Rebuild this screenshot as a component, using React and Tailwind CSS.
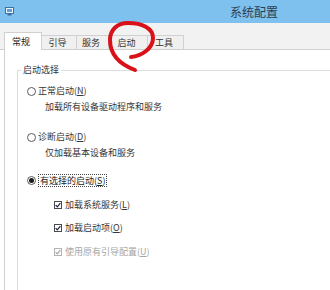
const tabs = [
  { label: '常规', w: 'w-[38px]', active: true },
  { label: '引导', w: 'w-[35px]' },
  { label: '服务', w: 'w-[32px]' },
  { label: '启动', w: 'w-[39px]' },
  { label: '工具', w: 'w-[36px]' },
];

const Radio = ({ checked }) => (
  <span className="w-[9px] h-[9px] rounded-full border border-[#5a5a5a] bg-white flex items-center justify-center shrink-0">
    {checked && <span className="w-[5px] h-[5px] rounded-full bg-[#1a1a1a]" />}
  </span>
);

const Check = ({ disabled }) => (
  <span
    className={
      disabled
        ? 'w-[8px] h-[8px] border border-[#b4b4b4] bg-white flex items-center justify-center shrink-0'
        : 'w-[8px] h-[8px] border border-[#4a4a4a] bg-white flex items-center justify-center shrink-0'
    }
  >
    <svg width="6" height="6" viewBox="0 0 6 6">
      <path
        d="M0.6 3.1 L2.3 4.8 L5.4 1.1"
        fill="none"
        stroke={disabled ? '#a8a8a8' : '#1f2f4a'}
        strokeWidth="1.3"
      />
    </svg>
  </span>
);

const App = () => {
  return (
    <div className="relative w-[330px] h-[290px] overflow-hidden bg-white text-[9px] leading-[12px] text-[#363636] font-['Noto_Sans_CJK_SC',sans-serif]">
      {/* title bar */}
      <div className="h-[23px] bg-[#7ec1ee] flex items-center">
        <svg className="ml-[5px]" width="9" height="9" viewBox="0 0 9 9">
          <rect x="0.5" y="0.5" width="8" height="6" fill="#eaf4fb" stroke="#3c6fa3" />
          <rect x="2" y="2" width="5" height="3" fill="#5d9fd6" />
          <rect x="2.5" y="7" width="4" height="1.5" fill="#3c6fa3" />
        </svg>
        <span className="ml-[216px] text-[12px] text-[#2e3d4e]">系统配置</span>
      </div>

      {/* tab strip */}
      <div className="h-[27px] bg-[#f2f2f2] flex items-end">
        <div className="w-[4px] h-[1px] bg-[#d0d0d0]" />
        {tabs.map((t) =>
          t.active ? (
            <div
              key={t.label}
              className={`${t.w} h-[18px] bg-white border border-b-0 border-[#d0d0d0] flex items-center justify-center pr-[4px] text-[#222]`}
            >
              {t.label}
            </div>
          ) : (
            <div
              key={t.label}
              className={`${t.w} h-[15px] bg-[#f0f0f0] border border-l-0 border-[#d0d0d0] flex items-center justify-center pr-[3px] text-[#333]`}
            >
              {t.label}
            </div>
          )
        )}
        <div className="flex-1 h-[1px] bg-[#d0d0d0]" />
      </div>

      {/* panel */}
      <div className="ml-[4px] h-[240px] overflow-hidden border-l border-[#d0d0d0] pt-[20px]">
        <div className="relative ml-[12px] h-[400px] border-l border-t border-b-0 border-r-0 border-l-[#dcdcdc] border-t-[#dcdcdc] pl-[9px] pt-[12px]">
          <span className="absolute -top-[7px] left-[3px] bg-white px-[2px] text-[#333]">启动选择</span>

          <div className="h-[16px] flex items-center gap-[2px]">
            <Radio />
            <span>正常启动(<u>N</u>)</span>
          </div>
          <div className="h-[16px] flex items-center pl-[18px]">加载所有设备驱动程序和服务</div>

          <div className="mt-[14px] h-[16px] flex items-center gap-[2px]">
            <Radio />
            <span>诊断启动(<u>D</u>)</span>
          </div>
          <div className="h-[16px] flex items-center pl-[18px]">仅加载基本设备和服务</div>

          <div className="mt-[11px] h-[16px] flex items-center gap-[2px]">
            <Radio checked />
            <span className="border border-dotted border-[#444] px-[1px] leading-[11px] text-[#222]">
              有选择的启动(<u>S</u>)
            </span>
          </div>

          <div className="pl-[27px]">
            <div className="mt-[9px] h-[16px] flex items-center gap-[3px]">
              <Check />
              <span>加载系统服务(<u>L</u>)</span>
            </div>
            <div className="mt-[7px] h-[16px] flex items-center gap-[3px]">
              <Check />
              <span>加载启动项(<u>O</u>)</span>
            </div>
            <div className="mt-[8px] h-[16px] flex items-center gap-[3px] text-[#a6a6a6]">
              <Check disabled />
              <span>使用原有引导配置(<u>U</u>)</span>
            </div>
          </div>
        </div>
      </div>

      {/* red hand-drawn mark around the 启动 tab */}
      <svg className="absolute inset-0 pointer-events-none" width="330" height="290" viewBox="0 0 330 290">
        <path
          d="M131 57 C141 56, 153 49, 153 38 C153 28, 142 23, 128 23 C117 23, 110 30, 110 40 C110 55, 119 64, 135 70"
          fill="none"
          stroke="#d9121a"
          strokeWidth="4"
          strokeLinecap="round"
        />
      </svg>
    </div>
  );
};

export default App;
